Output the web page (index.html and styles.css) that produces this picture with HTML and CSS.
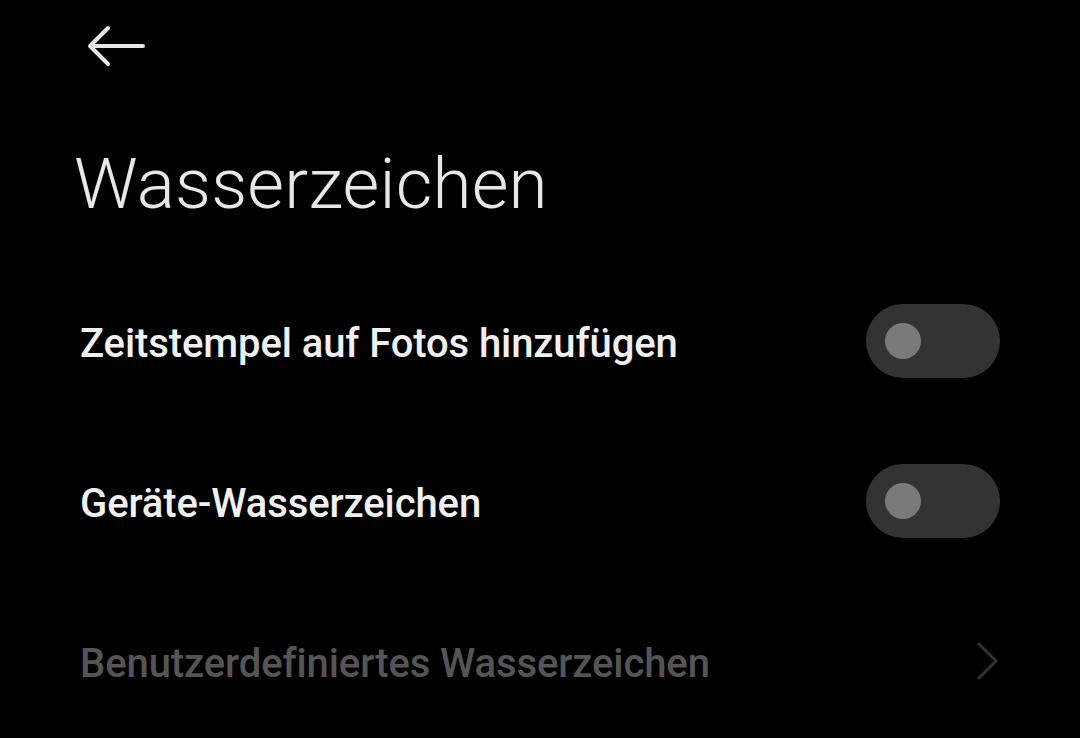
FILE: index.html
```html
<!DOCTYPE html>
<html lang="de">
<head>
<meta charset="utf-8">
<link rel="stylesheet" href="styles.css">
</head>
<body>
<div class="screen">
  <header class="topbar">
    <svg class="back" width="62" height="42" viewBox="0 0 62 42">
      <path d="M4 21 H57 M22 3 L4 21 L22 39" fill="none" stroke="#e6e6e6" stroke-width="4" stroke-linecap="round" stroke-linejoin="round"/>
    </svg>
  </header>
  <h1 class="title">Wasserzeichen</h1>
  <ul class="list">
    <li class="row">
      <span class="label">Zeitstempel auf Fotos hinzufügen</span>
      <span class="toggle"><span class="knob"></span></span>
    </li>
    <li class="row">
      <span class="label">Geräte-Wasserzeichen</span>
      <span class="toggle"><span class="knob"></span></span>
    </li>
    <li class="row disabled">
      <span class="label">Benutzerdefiniertes Wasserzeichen</span>
      <svg class="chev" width="24" height="40" viewBox="0 0 24 40">
        <path d="M3 3 L20 20 L3 37" fill="none" stroke="#333" stroke-width="3" stroke-linecap="round" stroke-linejoin="round"/>
      </svg>
    </li>
  </ul>
</div>
</body>
</html>
```
FILE: styles.css
```css
html, body {
  margin: 0;
  padding: 0;
  background: #000;
}
.screen {
  width: 1080px;
  height: 738px;
  overflow: hidden;
  background: #000;
  font-family: Roboto, "Noto Sans", sans-serif;
}
.topbar {
  height: 92px;
  padding-left: 86px;
  padding-top: 25px;
  box-sizing: border-box;
}
.back {
  display: block;
}
.title {
  margin: 0;
  padding-left: 74px;
  font-weight: 300;
  font-size: 71px;
  line-height: 184px;
  height: 169px;
  color: #e8e8e8;
  letter-spacing: 0.2px;
}
.list {
  list-style: none;
  margin: 0;
  padding: 0;
}
.row {
  height: 160px;
  display: flex;
  align-items: center;
  justify-content: space-between;
  padding: 0 80px 0 80px;
}
.label {
  font-size: 40px;
  font-weight: 500;
  color: #f0f0f0;
  padding-top: 4px;
  letter-spacing: -0.1px;
}
.disabled .label {
  color: #555;
}
.toggle {
  width: 134px;
  height: 74px;
  border-radius: 37px;
  background: #333;
  display: flex;
  align-items: center;
  padding-left: 19px;
  box-sizing: border-box;
}
.knob {
  width: 36px;
  height: 36px;
  border-radius: 50%;
  background: #7a7a7a;
}
.chev {
  display: block;
  margin-right: 0;
}
```
